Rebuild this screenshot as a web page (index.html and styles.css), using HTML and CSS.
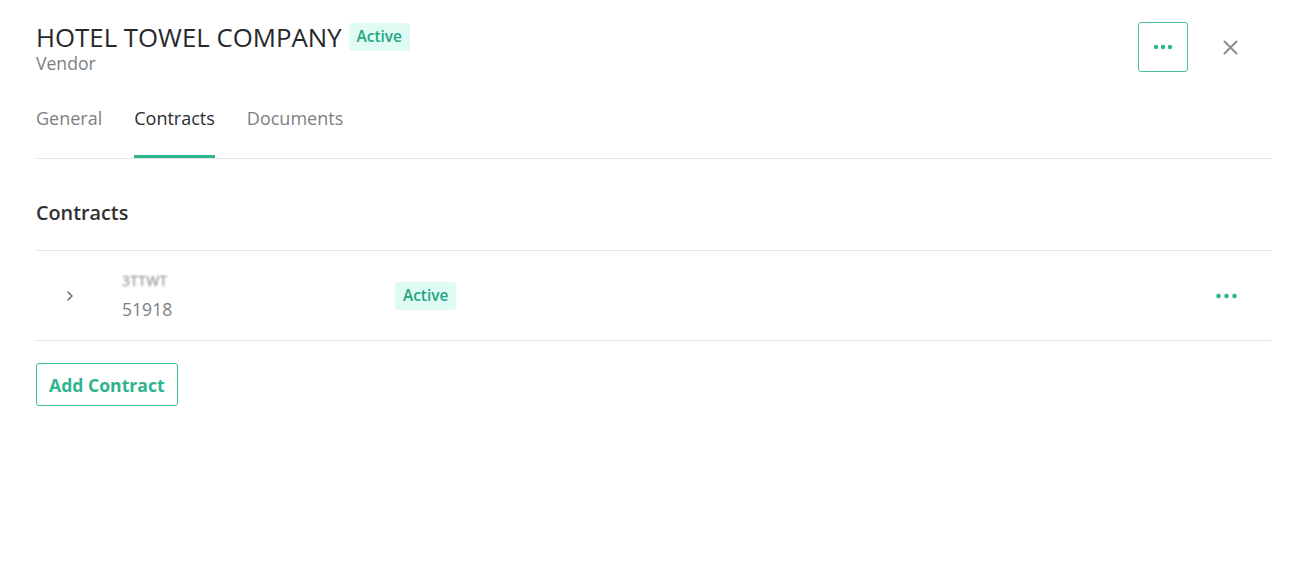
FILE: index.html
```html
<!DOCTYPE html>
<html>
<head>
<meta charset="utf-8">
<link rel="stylesheet" href="styles.css">
</head>
<body>
<div class="panel">
  <header class="head">
    <div class="title-block">
      <div class="title-row">
        <h1 class="title">HOTEL TOWEL COMPANY</h1>
        <span class="badge">Active</span>
      </div>
      <div class="subtitle">Vendor</div>
    </div>
    <div class="head-actions">
      <button class="icon-btn" aria-label="More">
        <svg width="20" height="6" viewBox="0 0 20 6"><circle cx="3" cy="3" r="2.2" fill="#2fb48f"/><circle cx="10" cy="3" r="2.2" fill="#2fb48f"/><circle cx="17" cy="3" r="2.2" fill="#2fb48f"/></svg>
      </button>
      <button class="close-btn" aria-label="Close">
        <svg width="15" height="15" viewBox="0 0 15 15"><path d="M1.5 1.5 L13.5 13.5 M13.5 1.5 L1.5 13.5" stroke="#8a8d91" stroke-width="2" stroke-linecap="round"/></svg>
      </button>
    </div>
  </header>
  <nav class="tabs">
    <a class="tab">General</a>
    <a class="tab active">Contracts</a>
    <a class="tab">Documents</a>
  </nav>
  <h2 class="section-title">Contracts</h2>
  <div class="row">
    <div class="chev">
      <svg width="8" height="12" viewBox="0 0 8 12"><path d="M2 2 L6 6 L2 10" fill="none" stroke="#6b6e72" stroke-width="1.6" stroke-linecap="round" stroke-linejoin="round"/></svg>
    </div>
    <div class="row-name">
      <div class="blurred">3TTWT</div>
      <div class="row-id">51918</div>
    </div>
    <span class="badge">Active</span>
    <div class="row-spacer"></div>
    <button class="dots-btn" aria-label="Row menu">
      <svg width="21" height="6" viewBox="0 0 21 6"><circle cx="2.5" cy="3" r="2.3" fill="#2fb48f"/><circle cx="10.5" cy="3" r="2.3" fill="#2fb48f"/><circle cx="18.5" cy="3" r="2.3" fill="#2fb48f"/></svg>
    </button>
  </div>
  <button class="add-btn">Add Contract</button>
</div>
</body>
</html>
```
FILE: styles.css
```css
* { box-sizing: border-box; }
html, body { margin: 0; padding: 0; background: #fff; }
body { font-family: "Open Sans", "Noto Sans", sans-serif; color: #2f3033; }
.panel { padding: 22px 34px 0 36px; }
.head { display: flex; justify-content: space-between; align-items: flex-start; }
.title-row { display: flex; align-items: center; gap: 7px; }
.title { margin: 0; font-size: 25.8px; font-weight: 500; line-height: 30px; color: #27282b; }
.badge { display: inline-block; background: #dffbf3; color: #23a683; font-size: 15.4px; font-weight: 600; line-height: 20px; padding: 4px 8px; border-radius: 3px; }
.subtitle { font-size: 17.6px; color: #7c7f83; line-height: 22px; }
.head-actions { display: flex; align-items: center; gap: 35px; }
.icon-btn { width: 50px; height: 50px; border: 1px solid #4cc4a2; border-radius: 3px; background: #fff; display: flex; align-items: center; justify-content: center; padding: 0; }
.close-btn { border: 0; background: none; padding: 0; width: 15px; height: 15px; display: flex; margin-right: 33px; }
.tabs { display: flex; gap: 32px; border-bottom: 1px solid #e3e5e8; margin-top: 32px; }
.tab { font-size: 18px; color: #7c7f83; line-height: 24px; padding: 0 0 25px; border-bottom: 3px solid transparent; font-weight: 500; }
.tab.active { color: #2b2c2f; border-bottom-color: #2fb48f; }
.section-title { margin: 0; font-size: 19.8px; font-weight: 600; color: #2f3033; line-height: 26px; padding: 41px 0 24px; }
.row { display: flex; align-items: center; border-top: 1px solid #e3e5e8; border-bottom: 1px solid #e3e5e8; height: 91px; }
.chev { width: 86px; padding-left: 30px; display: flex; align-items: center; }
.row-name { width: 273px; display: flex; flex-direction: column; padding-top: 2px; }
.blurred { font-size: 14px; color: #7a7c80; filter: blur(1.3px); line-height: 18px; margin-top: -2px; letter-spacing: 0.3px; }
.row-id { font-size: 17.6px; color: #7c7f83; line-height: 22px; margin-top: 8px; }
.row-spacer { flex: 1; }
.dots-btn { border: 0; background: none; padding: 0; margin-right: 34px; display: flex; }
.add-btn { margin-top: 22px; height: 43px; padding: 0 12px; border: 1px solid #3dbd99; border-radius: 3px; background: #fff; color: #2fb48f; font-family: "Open Sans", sans-serif; font-size: 17.6px; font-weight: 700; }
```
